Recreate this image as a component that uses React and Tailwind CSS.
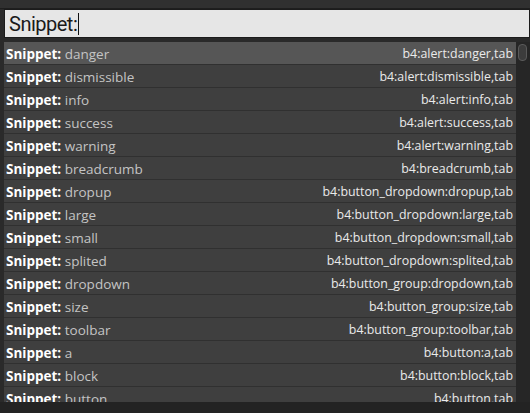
import React from "react";

const rows = [
  ["danger", "b4:alert:danger,tab"],
  ["dismissible", "b4:alert:dismissible,tab"],
  ["info", "b4:alert:info,tab"],
  ["success", "b4:alert:success,tab"],
  ["warning", "b4:alert:warning,tab"],
  ["breadcrumb", "b4:breadcrumb,tab"],
  ["dropup", "b4:button_dropdown:dropup,tab"],
  ["large", "b4:button_dropdown:large,tab"],
  ["small", "b4:button_dropdown:small,tab"],
  ["splited", "b4:button_dropdown:splited,tab"],
  ["dropdown", "b4:button_group:dropdown,tab"],
  ["size", "b4:button_group:size,tab"],
  ["toolbar", "b4:button_group:toolbar,tab"],
  ["a", "b4:button:a,tab"],
  ["block", "b4:button:block,tab"],
  ["button", "b4:button,tab"],
];

export default function App() {
  return (
    <div
      className="w-[530px] h-[413px] bg-[#242424] overflow-hidden flex flex-col"
      style={{ fontFamily: '"Open Sans", "Noto Sans", sans-serif' }}
    >
      <div className="h-[9px] bg-[#303030] border-b border-[#1e1e1e]" />
      <div className="pl-1 bg-[#2a2a2a]">
        <div
          className="h-[29px] bg-[#e6e6e6] border border-[#1c1c1c] flex items-center pl-[4px] text-[20px] tracking-[-0.5px] text-[#1a1a1a] leading-none"
          style={{ fontFamily: 'Roboto, "Open Sans", sans-serif' }}
        >
          <span>Snippet:</span>
          <span className="w-px h-[22px] bg-[#111] ml-[1px]" />
        </div>
      </div>
      <div className="h-[4px] bg-[#2a2a2a]" />
      <div className="flex pl-1 bg-[#2a2a2a]">
        <div className="flex-1 flex flex-col overflow-hidden h-[360px]">
          {rows.map(([name, trig], i) => (
            <div
              key={i}
              className={`h-[23px] shrink-0 flex items-center justify-between pl-[2px] pr-[3px] pt-[3px] border-b border-[#303030] ${
                i === 0 ? "bg-[#565656]" : "bg-[#3f3f3f]"
              }`}
            >
              <span className="text-[13.5px] whitespace-nowrap">
                <span className="font-bold text-white">Snippet:</span>{" "}
                <span className="text-[#c4c4c4]">{name}</span>
              </span>
              <span className="text-[12.4px] text-[#eaeaea] whitespace-nowrap">{trig}</span>
            </div>
          ))}
        </div>
        <div className="w-[14px] h-[360px] bg-[#262626] pt-[2px] pl-[2px]">
          <div className="w-[9px] h-[17px] rounded-[4px] bg-[#3c3c3c] border border-[#5a5a5a]" />
        </div>
      </div>
      <div className="flex-1 bg-[#232323]" />
    </div>
  );
}
